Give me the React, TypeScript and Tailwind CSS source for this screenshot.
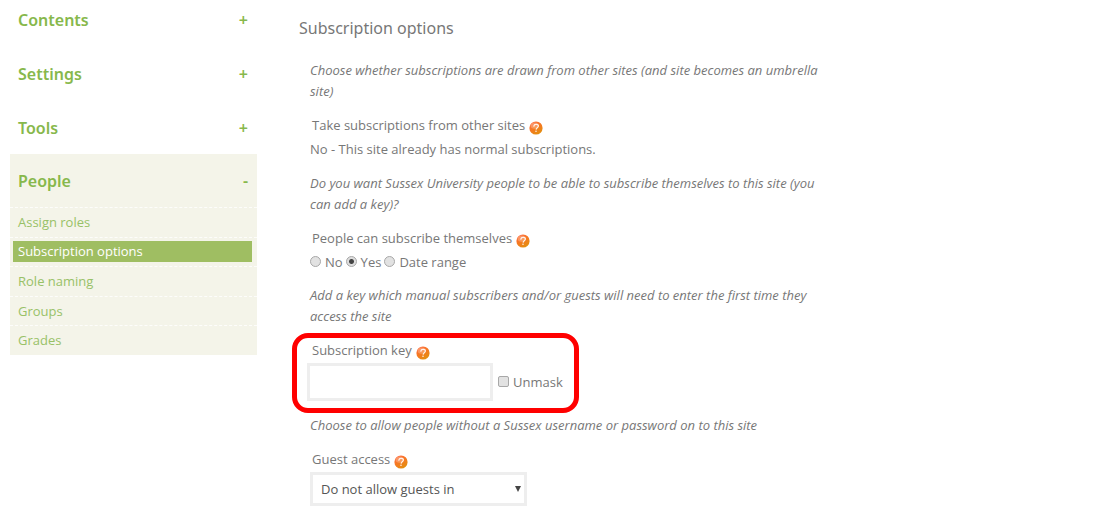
import React from "react";

const sections = ["Contents", "Settings", "Tools"];
const peopleLinks = ["Assign roles", "Subscription options", "Role naming", "Groups", "Grades"];

function HelpIcon() {
  return (
    <button type="button" aria-label="Help" className="mt-1 size-[14px] shrink-0">
      <svg viewBox="0 0 14 14" className="block size-full">
        <defs>
          <linearGradient id="help-fill" x1="0.2" y1="0" x2="0.8" y2="1">
            <stop offset="0" stopColor="#ff6a3c" />
            <stop offset="0.5" stopColor="#f47a20" />
            <stop offset="1" stopColor="#e0920c" />
          </linearGradient>
        </defs>
        <circle cx="7" cy="7" r="6.6" fill="url(#help-fill)" />
        <ellipse cx="5.6" cy="4.6" rx="4" ry="3.2" fill="#fff" opacity="0.25" />
        <path
          d="M4.9 5.2C5 3.9 6 3.3 7.2 3.3c1.3 0 2.2.7 2.2 1.8 0 1.5-2 1.6-2.2 3.1"
          fill="none"
          stroke="#fff"
          strokeOpacity="0.9"
          strokeWidth="1.2"
          strokeLinecap="round"
        />
        <circle cx="7" cy="10.3" r="0.8" fill="#fff" fillOpacity="0.9" />
      </svg>
    </button>
  );
}

function SectionButton({ label, sign }: { label: string; sign: string }) {
  return (
    <button
      type="button"
      aria-expanded={sign === "-"}
      className="flex w-full items-center justify-between pr-[9px] pl-2 text-left font-['Noto_Sans','Open_Sans',sans-serif] text-base font-semibold text-[#87b84c]"
    >
      <span>{label}</span>
      <span>{sign}</span>
    </button>
  );
}

function Sidebar() {
  return (
    <nav className="w-[247px] shrink-0 pt-2">
      <div className="mb-[14px] grid gap-[30px]">
        {sections.map((s) => (
          <SectionButton key={s} label={s} sign="+" />
        ))}
      </div>
      <div className="bg-[#f4f4e9]">
        <div className="pt-[15px] pb-[14px]">
          <SectionButton label="People" sign="-" />
        </div>
        <ul className="grid h-[148px] auto-rows-fr text-[13px]">
          {peopleLinks.map((l) => (
            <li key={l} className="flex items-center border-t border-dashed border-white/80 pr-[5px] pl-[3px]">
              {l === "Subscription options" ? (
                <a href="#" aria-current="page" className="w-full bg-[#9fbe62] pl-[5px] leading-[21px] text-white">
                  {l}
                </a>
              ) : (
                <a href="#" className="w-full pl-[5px] leading-[21px] text-[#98c167]">
                  {l}
                </a>
              )}
            </li>
          ))}
        </ul>
      </div>
    </nav>
  );
}

function Label({ text, htmlFor, id }: { text: string; htmlFor?: string; id?: string }) {
  return (
    <div className="flex h-[21px] items-center gap-1 pl-[2px]">
      {htmlFor ? <label htmlFor={htmlFor}>{text}</label> : <span id={id}>{text}</span>}
      <HelpIcon />
    </div>
  );
}

function Note({ children }: { children: React.ReactNode }) {
  return <p className="mb-[13px] italic">{children}</p>;
}

function Radio({ label, checked }: { label: string; checked?: boolean }) {
  return (
    <label className="flex items-center gap-1">
      <input
        type="radio"
        name="self-subscribe"
        defaultChecked={checked}
        className="mb-[3px] size-[11px] appearance-none rounded-full border border-[#a8a8a8] bg-[#e2e2e2] checked:bg-[radial-gradient(circle,#444_0_2px,#dedede_3px)]"
      />
      {label}
    </label>
  );
}

export default function App() {
  return (
    <div className="flex gap-[42px] bg-white pl-[10px] font-['Open_Sans','Noto_Sans',sans-serif]">
      <Sidebar />
      <main className="w-full max-w-[520px] pt-4 text-[13px] leading-[21px] text-[#777]">
        <h2 className="mb-5 font-['Noto_Sans','Open_Sans',sans-serif] text-base leading-6">Subscription options</h2>
        <form className="pl-[11px]">
          <section className="mb-[13px]">
            <Note>Choose whether subscriptions are drawn from other sites (and site becomes an umbrella site)</Note>
            <Label text="Take subscriptions from other sites" />
            <p className="mt-[3px]">No - This site already has normal subscriptions.</p>
          </section>

          <section className="mb-3">
            <Note>
              Do you want Sussex University people to be able to subscribe themselves to this site (you can add a key)?
            </Note>
            <Label text="People can subscribe themselves" id="self-label" />
            <div role="radiogroup" aria-labelledby="self-label" className="mt-[3px] flex gap-[3px]">
              <Radio label="No" />
              <Radio label="Yes" checked />
              <Radio label="Date range" />
            </div>
          </section>

          <section>
            <p className="italic">
              Add a key which manual subscribers and/or guests will need to enter the first time they access the site
            </p>
            <div className="mt-[6px] -ml-[18px] w-[287px] rounded-[16px] border-[5px] border-[#ff0000] pt-[2px] pb-[7px] pl-[10px]">
              <div className="pl-[3px]">
                <Label text="Subscription key" htmlFor="key" />
              </div>
              <div className="mt-[2px] flex items-center gap-[5px]">
                <input
                  id="key"
                  type="password"
                  className="h-[38px] w-[186px] border-[3px] border-[#eee] bg-white px-2 outline-none"
                />
                <label className="flex items-center gap-1">
                  <input
                    type="checkbox"
                    className="mb-[2px] size-[11px] appearance-none rounded-[2px] border border-[#a8a8a8] bg-[#e2e2e2]"
                  />
                  Unmask
                </label>
              </div>
            </div>
          </section>

          <section className="mt-[2px]">
            <Note>Choose to allow people without a Sussex username or password on to this site</Note>
            <Label text="Guest access" htmlFor="guest" />
            <div className="mt-[2px] grid w-[217px] items-center">
              <select
                id="guest"
                className="col-start-1 row-start-1 h-[34px] appearance-none border-[3px] border-[#eee] bg-white px-2 text-[#555] outline-none"
              >
                <option>Do not allow guests in</option>
              </select>
              <svg
                viewBox="0 0 6 6"
                aria-hidden="true"
                className="pointer-events-none col-start-1 row-start-1 mr-[6px] size-[6px] justify-self-end"
              >
                <path d="M0 0h6L3 6z" fill="#444" />
              </svg>
            </div>
          </section>
        </form>
      </main>
    </div>
  );
}
